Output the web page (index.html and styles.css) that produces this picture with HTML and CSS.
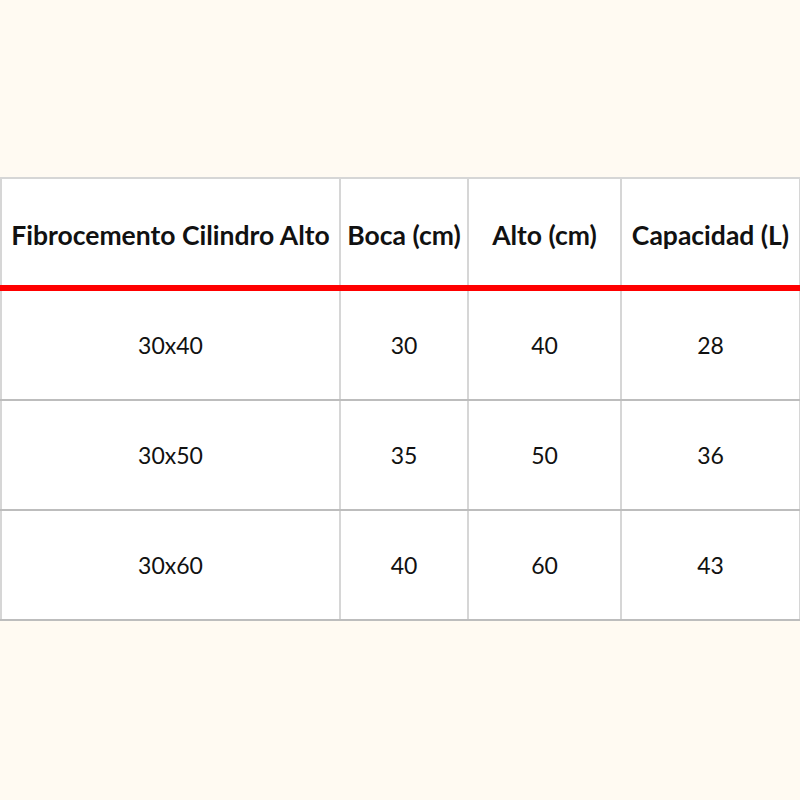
FILE: index.html
```html
<!DOCTYPE html>
<html lang="es">
<head>
<meta charset="utf-8">
<title>Fibrocemento Cilindro Alto</title>
<link rel="stylesheet" href="styles.css">
</head>
<body>
<div class="page">
  <table class="spec">
    <colgroup>
      <col class="c1"><col class="c2"><col class="c3"><col class="c4">
    </colgroup>
    <thead>
      <tr>
        <th>Fibrocemento Cilindro Alto</th>
        <th>Boca (cm)</th>
        <th>Alto (cm)</th>
        <th>Capacidad (L)</th>
      </tr>
    </thead>
    <tbody>
      <tr><td>30x40</td><td>30</td><td>40</td><td>28</td></tr>
      <tr><td>30x50</td><td>35</td><td>50</td><td>36</td></tr>
      <tr><td>30x60</td><td>40</td><td>60</td><td>43</td></tr>
    </tbody>
  </table>
</div>
</body>
</html>
```
FILE: styles.css
```css
html, body {
  margin: 0;
  padding: 0;
  background: #fffaf2;
}
.page {
  width: 800px;
  height: 800px;
  padding-top: 177px;
  box-sizing: border-box;
}
.spec {
  width: 799px;
  border-collapse: collapse;
  background: #ffffff;
  font-family: "Lato", "Open Sans", sans-serif;
  color: #111111;
  table-layout: fixed;
}
.c1 { width: 339px; }
.c2 { width: 128px; }
.c3 { width: 153px; }
.c4 { width: 179px; }
.spec th, .spec td {
  border-left: 2px solid #d6d6d6;
  border-right: 2px solid #d6d6d6;
  text-align: center;
  padding: 0;
}
.spec th {
  height: 100px;
  font-size: 26.5px;
  font-weight: 700;
  border-top: 2px solid #d6d6d6;
  border-bottom: 6px solid #ff0000;
  padding-top: 6px;
  white-space: nowrap;
}
.spec td {
  height: 108px;
  font-size: 23px;
  font-weight: 400;
  border-bottom: 2px solid #bdbdbd;
}
```
